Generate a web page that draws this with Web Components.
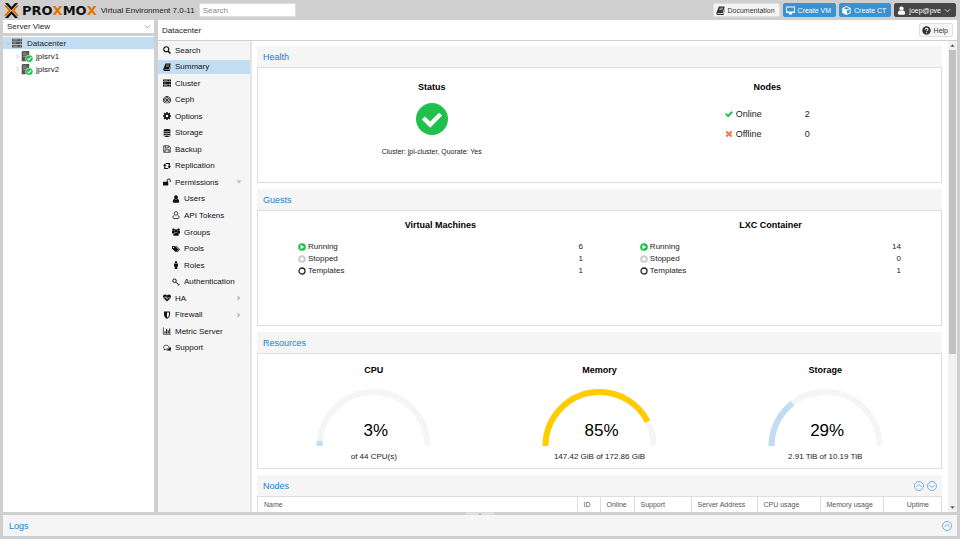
<!DOCTYPE html>
<html lang="en">
<head>
<meta charset="utf-8">
<title>Proxmox Virtual Environment</title>
<style>
    body {
        margin: 0;
        font-family: "Liberation Sans", Arial, sans-serif;
        font-size: 8px;
        color: #222;
    }
</style>
</head>
<body>
<pve-app></pve-app>

<script>
// ICONS, drawn on a 16x16 grid
const ICONS = {
    search: '<circle cx="6.5" cy="6.5" r="5" fill="none" stroke="currentColor" stroke-width="2.4"/><path d="M10 10l5 5" stroke="currentColor" stroke-width="3"/>',
    book: '<path d="M5 1h10.500l-3.500 12H2.500q-.6 1.200 1 1.200H13L16 4v2l-2.600 10H3Q0 16 .5 12.500z"/><path d="M6.500 4h6M5.700 6.500h6" stroke="#fff" stroke-width="1"/>',
    cluster: '<path d="M0 1h16v4H0zM0 6h16v4H0zM0 11h16v4H0z"/><path d="M2 3h7M2 8h4M2 13h7" stroke="#ccc" stroke-width="1"/><path d="M13 3h1M13 8h1M13 13h1" stroke="#fff" stroke-width="1.500"/>',
    ceph: '<g fill="none" stroke="currentColor" stroke-width="1.800"><path d="M4 14.200A7.200 7.200 0 1 1 12 14.200"/><path d="M5 11.500A4.600 4.600 0 1 1 11 11.500"/></g><circle cx="8" cy="8" r="2.200"/><path d="M6 9.500V15M10 9.500V15" stroke="currentColor" stroke-width="1.500"/>',
    gear: '<circle cx="8" cy="8" r="4.300" fill="none" stroke="currentColor" stroke-width="3.600"/><path d="M8 0v3M8 13v3M0 8h3M13 8h3M2.300 2.300l2 2M11.700 11.700l2 2M13.700 2.300l-2 2M4.300 11.700l-2 2" stroke="currentColor" stroke-width="3"/>',
    storage: '<ellipse cx="8" cy="2.600" rx="7" ry="2.600"/><path d="M1 4.500q7 3.500 14 0v2.700q-7 3.500-14 0zM1 8.500q7 3.500 14 0v2.700q-7 3.500-14 0zM1 12.300q7 3.500 14 0v1.500q-7 4-14 0z"/>',
    floppy: '<path d="M1.500 1.500h10l3 3v10h-13zM4 14V9.500h8V14M4.500 2v4h6V2" fill="none" stroke="currentColor" stroke-width="1.500"/>',
    retweet: '<path d="M3.500 6v7h7M12.500 10V3h-7" fill="none" stroke="currentColor" stroke-width="2.400"/><path d="M0 7.500L3.500 3 7 7.500zM9 8.500h7L12.500 13z"/>',
    unlock: '<path d="M0 7.500h10.500V15H0z"/><path d="M8.500 8V5a3 3 0 0 1 6 0v3" fill="none" stroke="currentColor" stroke-width="2"/>',
    user: '<circle cx="8" cy="4.500" r="3.800"/><path d="M4.500 7.500q-3 1.500-3 6Q1.500 15.500 4 15.500h8q2.500 0 2.500-2 0-4.500-3-6-3.500 2.500-7 0z"/>',
    userO: '<g fill="none" stroke="currentColor" stroke-width="1.500"><circle cx="8" cy="4.800" r="3.600"/><path d="M4.800 8q-3 1.500-3 5 0 2 2.200 2h8q2.200 0 2.200-2 0-3.500-3-5"/></g>',
    users: '<circle cx="3" cy="3.500" r="2.600"/><circle cx="13" cy="3.500" r="2.600"/><circle cx="8" cy="6" r="3.400"/><path d="M0 6h5l1 5H0zM16 6h-5l-1 5h6zM5 8.800q-2.500 1-2.500 5 0 1.700 2 1.700h7q2 0 2-1.700 0-4-2.500-5-3 2-6 0z"/>',
    tags: '<path fill-rule="evenodd" d="M0 2h6l7 7-5 5.500L0 7.500zM3 3.700a1.300 1.300 0 1 0 .1 0z"/><path d="M7.500 2H9l7 7-5 5.500-1-1L14 9z"/>',
    male: '<circle cx="8" cy="2.300" r="2.300"/><path d="M4 5h8v6h-1.500v5h-5v-5H4z"/>',
    key: '<circle cx="5" cy="5.500" r="3.500" fill="none" stroke="currentColor" stroke-width="2"/><path d="M7.500 8l6.500 6M10 12l2-2M12.500 15l2.500-2.500" stroke="currentColor" stroke-width="1.800"/>',
    heart: '<path d="M8 15L1.500 9Q0 7.500 0 5q0-4 4-4 2.500 0 4 2 1.500-2 4-2 4 0 4 4 0 2.500-1.500 4z"/><path d="M0 8h4.500L6 5l2 5.500L10 7l.8 1H16" fill="none" stroke="#f5f5f5" stroke-width="1.200"/>',
    shield: '<path fill-rule="evenodd" d="M2 1h12v7q0 5-6 7.800Q2 13 2 8zM8 3v10.500q4-2.200 4-5.500V3z"/>',
    chart: '<path d="M.7 1v13.500H16" fill="none" stroke="currentColor" stroke-width="1.400"/><path d="M4 13V8.500M7.200 13V4M10.300 13V6.500M13.500 13V3" stroke="currentColor" stroke-width="2"/>',
    comments: '<path d="M6.500 2.500C3 2.500 1 4.300 1 6.500q0 2 2 3.200L2.500 12l3-1.500c4 .3 6.500-1.700 6.500-4s-2.500-4-5.500-4z" fill="none" stroke="currentColor" stroke-width="1.500"/><path d="M13.500 5.500q2.500 1.300 2.500 3.800 0 2-1.500 3l1 2.700-3.500-2q-3.500.5-5.500-1.200 6 0 7-6.300z"/>',
    monitor: '<path fill-rule="evenodd" d="M0 1h16v11.500h-5.500l.5 2.500H5l.5-2.500H0zM1.600 2.600v7h12.800v-7z"/>',
    cube: '<path fill-rule="evenodd" d="M8 0l7.500 3.500v9L8 16 .5 12.500v-9zM8 1.800L3 4l5 2 5-2zM8.800 7.800v6l5-2.300V5.800z"/>',
    help: '<circle cx="8" cy="8" r="7.500"/><path d="M5.500 6.200q.3-2.400 2.700-2.400 2.500 0 2.500 2 0 1.200-1.300 1.900Q8.100 8.400 8.100 9.500M8.100 11v2" fill="none" stroke="#fff" stroke-width="1.800"/>',
    down: '<path d="M2 5l6 6 6-6" fill="none" stroke="currentColor" stroke-width="1.700"/>',
    right: '<path d="M5 2l6 6-6 6" fill="none" stroke="currentColor" stroke-width="2.200"/>',
    triDown: '<path d="M1 4h14l-7 8z"/>',
    triUp: '<path d="M1 12h14L8 4z"/>',
    triRight: '<path d="M4 1v14l8-7z"/>',
    circleUp: '<g fill="none" stroke="currentColor" stroke-width="1.300"><circle cx="8" cy="8" r="7.200"/><path d="M4 9.500l4-4 4 4"/></g>',
    circleDown: '<g fill="none" stroke="currentColor" stroke-width="1.300"><circle cx="8" cy="8" r="7.200"/><path d="M4 6.500l4 4 4-4"/></g>',
    check: '<path d="M0 8.500L2.500 6 6 9.500l7-7.500L16 5 6.200 15z"/>',
    cross: '<path d="M1 4.500L4 1.500 8 5 12 1.500 15 4.500 11.500 8l3.500 3.500-3 3L8 11 4 14.500l-3-3L4.500 8z"/>',
    okCircle: '<circle cx="8" cy="8" r="8"/><path d="M2.900 8.200l1.500-1.500 2.700 2.600 4.400-4.400L13.100 6.300 7.100 12.400z" fill="#fff"/>',
    play: '<circle cx="8" cy="8" r="7.700"/><path d="M5 3.500v9L12.500 8z" fill="#fff"/>',
    ring: '<circle cx="8" cy="8" r="6" fill="none" stroke="currentColor" stroke-width="2.600"/>',
    ringThick: '<circle cx="8" cy="8" r="5.700" fill="none" stroke="currentColor" stroke-width="4"/>',
    node: '<path d="M1 1l2-1h9v15H1z"/><path d="M3 3h5M3 5.500h5M3 8h5" stroke="#aaa" stroke-width="1"/><circle cx="12" cy="11" r="5.600" fill="#fff"/><circle cx="12" cy="11" r="5" fill="#21bf4b"/><path d="M9.500 11l2 2 3.500-4" fill="none" stroke="#fff" stroke-width="1.500"/>',
    logo: '<path d="M1 0h3.300L8 4.200 11.700 0H15L8 7.600zM1 16h3.300L8 11.800l3.700 4.200H15L8 8.400z" fill="#111"/><path d="M0 2.500h2.800L7.500 8l-4.700 5.500H0L4.700 8zM16 2.500h-2.800L8.500 8l4.700 5.500H16L11.300 8z" fill="#e57000"/>'
};

function define(name, html) {
    customElements.define(name, class extends HTMLElement {
        constructor() {
            super();
            this.attachShadow({ mode: "open" });
        }
        connectedCallback() {
            this.shadowRoot.innerHTML = typeof html === "function" ? html(this) : html;
        }
    });
}

// ICON
define("pve-icon", el => `
    <style>
        :host { display: block; flex: none; width: var(--size, 8px); height: var(--size, 8px); }
        svg { display: block; width: 100%; height: 100%; overflow: visible; }
    </style>
    <svg viewBox="0 0 16 16" fill="currentColor" aria-hidden="true">${ICONS[el.getAttribute("name")]}</svg>
`);

// BUTTON
define("pve-button", el => `
    <style>
        :host { display: block; flex: none; color: #333; }
        button {
            display: flex;
            align-items: center;
            gap: 3px;
            height: 14px;
            padding: 0 4px 0 2px;
            border: 1px solid #e0e0e0;
            border-radius: 2px;
            background: #f5f5f5;
            color: inherit;
            font: 500 7px "Liberation Sans", Arial, sans-serif;
            white-space: nowrap;
        }
        :host([kind=blue]) button { background: #3892d4; border-color: #3892d4; color: #fff; }
        :host([kind=dark]) button { background: #464646; border-color: #464646; color: #fff; }
        .icon { --size: 9px; }
    </style>
    <button type="button"><pve-icon class="icon" name="${el.getAttribute("icon")}"></pve-icon><slot></slot></button>
`);

// TOP BAR
define("pve-header", `
    <style>
        :host {
            display: flex;
            align-items: center;
            height: 20px;
            padding: 0 4px;
        }
        .logo { --size: 15px; }
        .name {
            margin: 0 4px 0 3px;
            font: bold 13px "DejaVu Sans", sans-serif;
            color: #111;
        }
        .name b { color: #e57000; }
        input {
            box-sizing: border-box;
            width: 97px;
            height: 14px;
            margin-left: 4px;
            padding: 0 3px;
            border: 1px solid #ddd;
            background: #fff;
            font: 8px "Liberation Sans", Arial, sans-serif;
        }
        input::placeholder { color: #888; }
        .buttons { display: flex; gap: 3px; margin-left: auto; }
        .arrow { --size: 7px; }
    </style>
    <pve-icon class="logo" name="logo"></pve-icon>
    <span class="name">PRO<b>X</b>MO<b>X</b></span>
    <span>Virtual Environment 7.0-11</span>
    <input type="text" placeholder="Search" aria-label="Search">
    <div class="buttons">
        <pve-button icon="book">Documentation</pve-button>
        <pve-button icon="monitor" kind="blue">Create VM</pve-button>
        <pve-button icon="cube" kind="blue">Create CT</pve-button>
        <pve-button icon="user" kind="dark">joep@pve <pve-icon class="arrow" name="down"></pve-icon></pve-button>
    </div>
`);

// SERVER TREE
define("pve-tree", `
    <style>
        :host { display: flex; flex-direction: column; gap: 3px; min-height: 0; }
        .view { display: grid; align-items: center; background: #fff; height: 13px; }
        .view > * { grid-area: 1 / 1; }
        .view pve-icon { --size: 7px; justify-self: end; margin-right: 3px; color: #888; pointer-events: none; }
        select {
            appearance: none;
            width: 100%;
            height: 13px;
            padding: 0 4px;
            border: 0;
            background: none;
            color: #222;
            font: 8px "Liberation Sans", Arial, sans-serif;
        }
        ul {
            flex: 1;
            display: flex;
            flex-direction: column;
            gap: 1px;
            margin: 0;
            padding: 1px 0 0;
            list-style: none;
            background: #fff;
        }
        li { display: flex; align-items: center; height: 12px; padding-left: 3px; --size: 5px; color: #aaa; }
        li.child { padding-left: 12px; }
        li.selected { background: #c2ddf2; }
        li .type { --size: 10px; margin: 0 5px 0 1px; color: #555; }
        li.child .type { --size: 11px; margin-right: 4px; }
        li a { color: #222; text-decoration: none; }
    </style>
    <div class="view">
        <select aria-label="View"><option>Server View</option></select>
        <pve-icon name="down"></pve-icon>
    </div>
    <ul>
        <li class="selected"><pve-icon name="down"></pve-icon><pve-icon class="type" name="cluster"></pve-icon><a href="#dc">Datacenter</a></li>
        <li class="child"><pve-icon name="right"></pve-icon><pve-icon class="type" name="node"></pve-icon><a href="#jplsrv1">jplsrv1</a></li>
        <li class="child"><pve-icon name="right"></pve-icon><pve-icon class="type" name="node"></pve-icon><a href="#jplsrv2">jplsrv2</a></li>
    </ul>
`);

// SIDE MENU
define("pve-menu-item", el => `
    <style>
        :host { display: block; }
        a {
            display: flex;
            align-items: center;
            gap: 4px;
            height: 14px;
            padding: 0 8px 0 5px;
            color: #111;
            text-decoration: none;
        }
        :host([sub]) a { padding-left: 14px; }
        :host([active]) a { background: #c2ddf2; }
        .more { --size: 6px; margin-left: auto; color: #bbb; }
    </style>
    <a href="#"><pve-icon name="${el.getAttribute("icon")}"></pve-icon><slot></slot>
    ${el.hasAttribute("more") ? `<pve-icon class="more" name="${el.getAttribute("more")}"></pve-icon>` : ""}</a>
`);

define("pve-menu", `
    <style>
        :host { display: block; background: #f5f5f5; border-right: 2px solid #e4e4e4; }
        nav {
            display: flex;
            flex-direction: column;
            justify-content: space-between;
            height: 312px;
            padding-top: 2px;
        }
    </style>
    <nav>
        <pve-menu-item icon="search">Search</pve-menu-item>
        <pve-menu-item icon="book" active>Summary</pve-menu-item>
        <pve-menu-item icon="cluster">Cluster</pve-menu-item>
        <pve-menu-item icon="ceph">Ceph</pve-menu-item>
        <pve-menu-item icon="gear">Options</pve-menu-item>
        <pve-menu-item icon="storage">Storage</pve-menu-item>
        <pve-menu-item icon="floppy">Backup</pve-menu-item>
        <pve-menu-item icon="retweet">Replication</pve-menu-item>
        <pve-menu-item icon="unlock" more="triDown">Permissions</pve-menu-item>
        <pve-menu-item icon="user" sub>Users</pve-menu-item>
        <pve-menu-item icon="userO" sub>API Tokens</pve-menu-item>
        <pve-menu-item icon="users" sub>Groups</pve-menu-item>
        <pve-menu-item icon="tags" sub>Pools</pve-menu-item>
        <pve-menu-item icon="male" sub>Roles</pve-menu-item>
        <pve-menu-item icon="key" sub>Authentication</pve-menu-item>
        <pve-menu-item icon="heart" more="triRight">HA</pve-menu-item>
        <pve-menu-item icon="shield" more="triRight">Firewall</pve-menu-item>
        <pve-menu-item icon="chart">Metric Server</pve-menu-item>
        <pve-menu-item icon="comments">Support</pve-menu-item>
    </nav>
`);

// PANEL
define("pve-panel", el => `
    <style>
        :host { display: block; }
        header {
            display: flex;
            align-items: center;
            justify-content: space-between;
            height: 21px;
            padding: 0 5px 0 6px;
            background: #f5f5f5;
        }
        h2 { margin: 0; font-size: 9px; font-weight: normal; color: #157fcc; }
        .body { box-sizing: border-box; min-height: 116px; border: 1px solid #ddd; }
    </style>
    <header><h2>${el.getAttribute("heading")}</h2><slot name="tools"></slot></header>
    <div class="body"><slot></slot></div>
`);

// HEALTH
define("pve-health", `
    <style>
        :host { display: grid; grid-template-columns: 1fr 1fr; padding: 14px 6px 0; text-align: center; }
        h3 { margin: 0; font-size: 9px; line-height: 10px; color: #000; }
        .ok { --size: 32px; margin: 11px auto 12px; color: #21bf4b; }
        p { margin: 0; font-size: 7px; line-height: 10px; }
        dl {
            display: grid;
            grid-template-columns: 8px 1fr auto;
            column-gap: 3px;
            align-items: center;
            width: 85px;
            margin: 12px auto;
            font-size: 9px;
            line-height: 20px;
            text-align: left;
        }
        dd { margin: 0; }
        .good { color: #21bf4b; }
        .bad { color: #f57c4d; }
    </style>
    <section><h3>Status</h3><pve-icon class="ok" name="okCircle"></pve-icon><p>Cluster: jpl-cluster, Quorate: Yes</p></section>
    <section>
        <h3>Nodes</h3>
        <dl>
            <pve-icon class="good" name="check"></pve-icon><dt>Online</dt><dd>2</dd>
            <pve-icon class="bad" name="cross"></pve-icon><dt>Offline</dt><dd>0</dd>
        </dl>
    </section>
`);

// GUESTS
define("pve-guest-list", el => {
    const [running, stopped, templates] = el.getAttribute("counts").split(",");
    return `
    <style>
        :host { display: block; }
        h3 { margin: 0 0 10px; font-size: 9px; line-height: 12px; text-align: center; color: #000; }
        dl {
            display: grid;
            grid-template-columns: 8px 1fr auto;
            column-gap: 2px;
            align-items: center;
            margin: 0;
            line-height: 12px;
        }
        dd { margin: 0; text-align: right; }
        .running { color: #21bf4b; }
        .stopped { color: #ccc; }
    </style>
    <h3><slot></slot></h3>
    <dl>
        <pve-icon class="running" name="play"></pve-icon><dt>Running</dt><dd>${running}</dd>
        <pve-icon class="stopped" name="ringThick"></pve-icon><dt>Stopped</dt><dd>${stopped}</dd>
        <pve-icon name="ring"></pve-icon><dt>Templates</dt><dd>${templates}</dd>
    </dl>`;
});

define("pve-guests", `
    <style>
        :host { display: grid; grid-template-columns: 12fr 11fr; gap: 57px; padding: 8px 40px 0; }
    </style>
    <pve-guest-list counts="6,1,1">Virtual Machines</pve-guest-list>
    <pve-guest-list counts="14,0,1">LXC Container</pve-guest-list>
`);

// GAUGE
define("pve-gauge", el => `
    <style>
        :host { display: grid; justify-items: center; }
        h3 { margin: 0 0 13px; font-size: 9px; line-height: 10px; color: #000; }
        .dial { display: grid; justify-items: center; align-items: end; }
        .dial > * { grid-area: 1 / 1; }
        svg { display: block; width: 115px; height: 58px; }
        path { fill: none; stroke-width: 6; }
        .value { padding: 0 0 5px 4px; font-size: 17px; line-height: 20px; color: #000; }
        p { margin: 6px 0 0; line-height: 10px; }
    </style>
    <h3>${el.getAttribute("heading")}</h3>
    <div class="dial">
        <svg viewBox="0 0 115 58" aria-hidden="true">
            <path d="M3.500 58A54 54 0 0 1 111.500 58" stroke="#f5f5f5"/>
            <path d="M3.500 58A54 54 0 0 1 111.500 58" stroke="${el.getAttribute("color")}" pathLength="100" stroke-dasharray="${el.getAttribute("value")} 200"/>
        </svg>
        <span class="value">${el.getAttribute("value")}%</span>
    </div>
    <p><slot></slot></p>
`);

define("pve-resources", `
    <style>
        :host { display: grid; grid-template-columns: repeat(3, 1fr); padding: 11px 3px 0; }
    </style>
    <pve-gauge heading="CPU" value="3" color="#c2ddf2">of 44 CPU(s)</pve-gauge>
    <pve-gauge heading="Memory" value="85" color="#fc0">147.42 GiB of 172.86 GiB</pve-gauge>
    <pve-gauge heading="Storage" value="29" color="#c2ddf2">2.91 TiB of 10.19 TiB</pve-gauge>
`);

// NODES TABLE
define("pve-node-table", `
    <style>
        :host { display: block; }
        table { width: 100%; table-layout: fixed; border-collapse: collapse; }
        th {
            box-sizing: border-box;
            height: 18px;
            padding: 0 6px;
            border-right: 1px solid #ddd;
            border-bottom: 1px solid #ddd;
            font-size: 7px;
            font-weight: normal;
            line-height: 15px;
            text-align: left;
            vertical-align: top;
            white-space: nowrap;
            color: #555;
        }
        th:last-child { padding-right: 12px; border-right: 0; text-align: right; }
        .id { width: 23px; }
        .online { width: 34px; }
        .support { width: 57px; }
        .address { width: 66px; }
        .usage { width: 63px; }
        .uptime { width: 58px; }
    </style>
    <table>
        <thead>
            <tr>
                <th>Name</th><th class="id">ID</th><th class="online">Online</th><th class="support">Support</th>
                <th class="address">Server Address</th><th class="usage">CPU usage</th><th class="usage">Memory usage</th><th class="uptime">Uptime</th>
            </tr>
        </thead>
    </table>
`);

// SCROLLBAR
define("pve-scrollbar", `
    <style>
        :host {
            display: grid;
            grid-template-rows: 9px 1fr 9px;
            justify-items: center;
            align-items: center;
            width: 9px;
            background: #f1f1f1;
            --size: 5px;
            color: #555;
        }
        .thumb { align-self: start; width: 7px; height: 67%; background: #c1c1c1; }
    </style>
    <pve-icon name="triUp"></pve-icon>
    <div class="thumb"></div>
    <pve-icon name="triDown"></pve-icon>
`);

// DATACENTER
define("pve-datacenter", `
    <style>
        :host { display: grid; grid-template-rows: auto 1fr; min-height: 0; background: #fff; }
        .title {
            display: flex;
            align-items: center;
            justify-content: space-between;
            height: 20px;
            padding: 0 4px;
            border-bottom: 1px solid #d0d0d0;
        }
        .main { display: grid; grid-template-columns: 94px 1fr 9px; min-height: 0; }
        .panels {
            display: flex;
            flex-direction: column;
            gap: 6px;
            padding: 5px 6px 0 5px;
            overflow: hidden;
        }
        .tools { display: flex; gap: 3px; --size: 10px; color: #5a9fd4; }
    </style>
    <div class="title"><span>Datacenter</span><pve-button icon="help">Help</pve-button></div>
    <div class="main">
        <pve-menu></pve-menu>
        <div class="panels">
            <pve-panel heading="Health"><pve-health></pve-health></pve-panel>
            <pve-panel heading="Guests"><pve-guests></pve-guests></pve-panel>
            <pve-panel heading="Resources"><pve-resources></pve-resources></pve-panel>
            <pve-panel heading="Nodes">
                <div class="tools" slot="tools"><pve-icon name="circleUp"></pve-icon><pve-icon name="circleDown"></pve-icon></div>
                <pve-node-table></pve-node-table>
            </pve-panel>
        </div>
        <pve-scrollbar></pve-scrollbar>
    </div>
`);

// LOG BAR
define("pve-logs", `
    <style>
        :host { display: block; padding: 0 3px 3px; }
        .grip { display: grid; place-items: center; width: 28px; height: 3px; margin: 0 auto; background: #ddd; color: #aaa; --size: 4px; }
        .bar {
            display: flex;
            align-items: center;
            justify-content: space-between;
            height: 21px;
            padding: 0 5px 0 6px;
            background: #f5f5f5;
            color: #157fcc;
            font-size: 9px;
        }
        .bar pve-icon { --size: 10px; color: #5a9fd4; }
    </style>
    <div class="grip"><pve-icon name="triUp"></pve-icon></div>
    <div class="bar"><span>Logs</span><pve-icon name="circleUp"></pve-icon></div>
`);

// APP
define("pve-app", `
    <style>
        :host {
            display: grid;
            grid-template-rows: auto minmax(0, 1fr) auto;
            height: 100vh;
            background: #cfcfcf;
        }
        .work {
            display: grid;
            grid-template-columns: 151px 1fr;
            gap: 4px;
            min-height: 0;
            padding: 0 3px;
        }
    </style>
    <pve-header></pve-header>
    <div class="work">
        <pve-tree></pve-tree>
        <pve-datacenter></pve-datacenter>
    </div>
    <pve-logs></pve-logs>
`);
</script>
</body>
</html>
